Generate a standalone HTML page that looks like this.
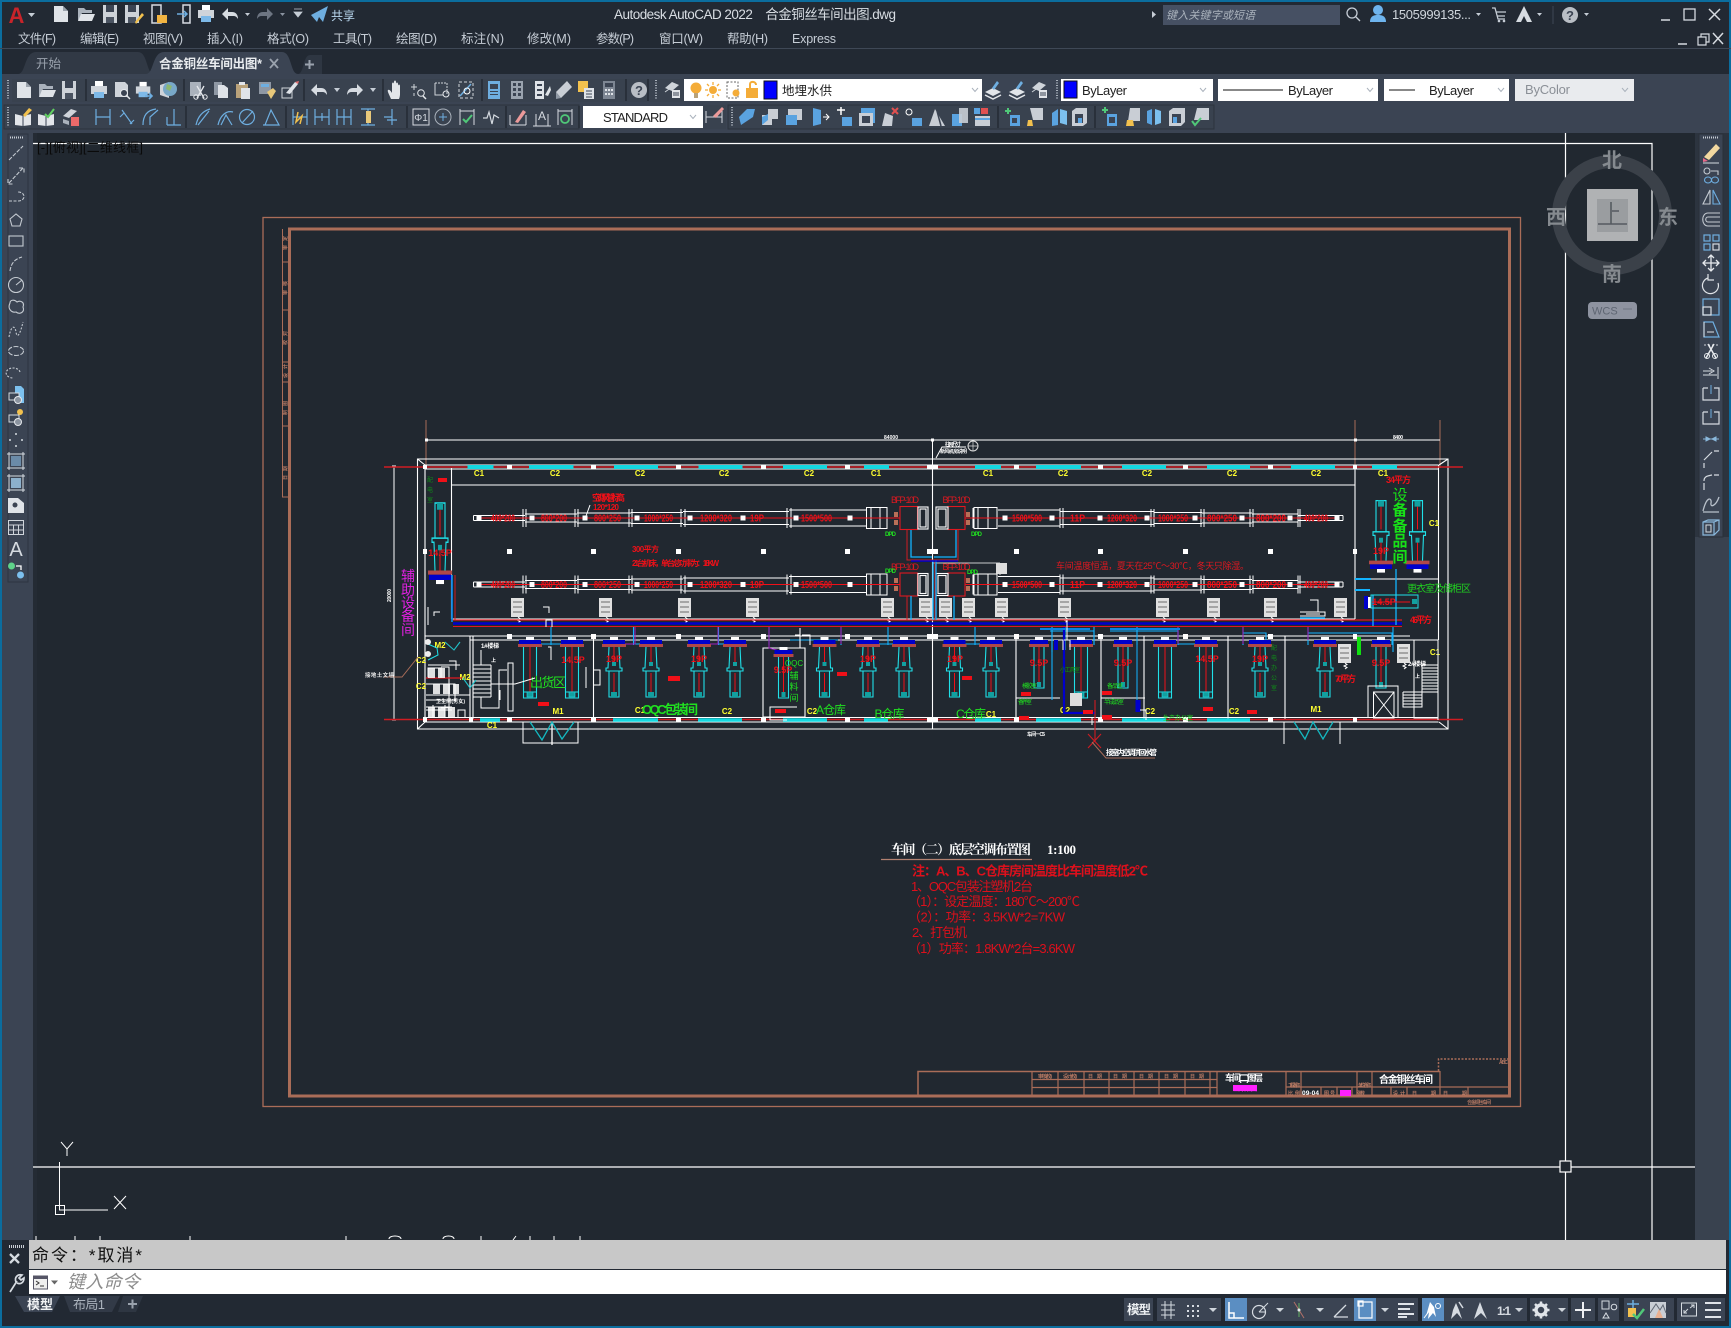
<!DOCTYPE html>
<html lang="zh"><head><meta charset="utf-8"><title>Autodesk AutoCAD 2022</title>
<style>
html,body{margin:0;padding:0;background:#222933;width:1731px;height:1328px;overflow:hidden}
svg{display:block;font-family:"Liberation Sans","Noto Sans CJK SC",sans-serif}
.m{font-size:12.5px;fill:#c6cdd6}
.y{font-size:8px;fill:#ffff30;font-weight:bold}
.r{font-size:10px;fill:#f01018;font-weight:bold}
.g{fill:#20e020}
.n{font-size:13px;fill:#dd101c}
.tw{font-size:5px;fill:#fff;font-weight:bold}
.b{font-size:5px;fill:#b87a64;font-weight:bold}
.dd{fill:none;stroke:#aab2bc;stroke-width:1}
.ic{fill:none;stroke:#d6dbe1;stroke-width:1.3}
.ib{fill:none;stroke:#6eaee0;stroke-width:1.2}
.st{fill:none;stroke:#c4cad1;stroke-width:1.1}
</style></head><body>
<svg width="1731" height="1328" viewBox="0 0 1731 1328" xmlns="http://www.w3.org/2000/svg">
<defs>
<g id="new"><path d="M-7-8h9l5 5V8H-7z" fill="#dfe3e8"/><path d="M2-8v5h5" fill="#9aa2ac"/></g>
<g id="open"><path d="M-8 7V-6h6l2 2h6v3H-4L-8 7z" fill="#aab2bc"/><path d="M-5 0H9L6 7H-8z" fill="#dfe3e8"/></g>
<g id="save"><path d="M-7-9H7V9H-7z" fill="#cdd2d8"/><path d="M-4-9h8v7h-8z" fill="#3b4453"/><path d="M-4 3h8v6h-8z" fill="#4a5361"/></g>
<g id="saveas"><use href="#save" x="-2"/><path d="M1 8L8-1l2 2-8 9z" fill="#f2c14e"/></g>
<g id="print"><path d="M-4-9H4v5h-8z" fill="#fff"/><path d="M-8-4H8V4H-8z" fill="#cfd4da"/><path d="M-5 2H5V8H-5z" fill="#7db9e8"/></g>
<g id="prev"><path d="M-7-8h10l3 3v12H-7z" fill="#cfd4da"/><circle cx="2" cy="3" r="3.5" fill="#3b4453" stroke="#e6e9ed"/><path d="M5 6l3 3" stroke="#e6e9ed" stroke-width="1.5"/></g>
<g id="plot"><use href="#print" x="-1" transform="scale(.9)"/><path d="M1 6h6M5 3l3 3-3 3" stroke="#6eaee0" stroke-width="1.6" fill="none"/></g>
<g id="globe"><path d="M-8-5L1-8V8L-8 5z" fill="#cfd4da"/><circle cx="2" cy="-1" r="7" fill="#78a8c8"/><path d="M-1-6L4-4 2 1-2-1z" fill="#8cb870"/></g>
<g id="cut"><path d="M-8-8H3V6H-8z" fill="#aab2bc"/><path d="M-1-4L6 8M6-4L-1 8" stroke="#e6e9ed" stroke-width="1.3"/><circle cx="-2" cy="7" r="2.2" fill="none" stroke="#e6e9ed"/><circle cx="7" cy="7" r="2.2" fill="none" stroke="#e6e9ed"/></g>
<g id="copy"><path d="M-7-8h8v13h-8z" fill="#8f98a4"/><path d="M-3-5h6l4 3V8H-3z" fill="#dfe3e8"/></g>
<g id="paste"><path d="M-7-6H5V8H-7z" fill="#b9a27a"/><path d="M-4-8h6v3h-6z" fill="#e2e5e9"/><path d="M-2-2h9V9h-9z" fill="#dfe3e8"/></g>
<g id="match"><path d="M-8-8H4V4H-8z" fill="#8f98a4"/><path d="M-6-6h8v3h-8z" fill="#6eaee0"/><path d="M0 2L6-2 9 1 4 9z" fill="#e8c87a"/></g>
<g id="block"><path d="M-8-2H2V8H-8z" fill="none" stroke="#cfd4da"/><path d="M-4 3l9-11 3 2-8 10z" fill="#dfe3e8"/><path d="M5-8l3 2 1-3z" fill="#e87070"/></g>
<g id="undo"><path d="M-8 0L-2-6v4h4c4 0 6 3 6 7-2-3-3-3-6-3h-4v4z" fill="#d6dbe1"/></g>
<g id="redo"><path d="M8 0L2-6v4h-4c-4 0-6 3-6 7 2-3 3-3 6-3h4v4z" fill="#d6dbe1"/></g>
<g id="redog"><path d="M8 0L2-6v4h-4c-4 0-6 3-6 7 2-3 3-3 6-3h4v4z" fill="#6d7582"/></g>
<g id="pan"><path d="M-5 9C-7 4-9 1-8 0s3 1 4 3V-6c0-2 2-2 2 0V-8c0-2 2-2 2 0v2c0-2 2-2 2 0v2c0-2 2-2 2 0V4C4 7 3 9 3 9z" fill="#e2e5e9"/></g>
<g id="zr"><path d="M-8-3H-2M-5-6V0M-5 3v3" stroke="#cfd4da" fill="none"/><circle cx="2" cy="3" r="3.3" fill="none" stroke="#e6e9ed"/><path d="M4 6l3 3" stroke="#e6e9ed" stroke-width="1.5"/></g>
<g id="zw"><path d="M-7-7H5V4" fill="none" stroke="#cfd4da" stroke-dasharray="2 1"/><path d="M-7-7V5H1" fill="none" stroke="#cfd4da"/><circle cx="4" cy="4" r="3" fill="none" stroke="#e6e9ed"/></g>
<g id="zp"><path d="M-7-8H7V8H-7z" fill="none" stroke="#cfd4da" stroke-dasharray="3 2"/><path d="M-6 6L5-6" stroke="#6eaee0" stroke-width="1.5"/><circle cx="1" cy="1" r="3" fill="none" stroke="#fff"/></g>
<g id="prop"><path d="M-6-9H6V9H-6z" fill="#6eaee0"/><path d="M-4-6h8v5h-8zM-4 1h8v1h-8zM-4 4h8v1h-8z" fill="#3b4453"/></g>
<g id="grid2"><path d="M-6-9H6V9H-6z" fill="#9aa3af"/><path d="M-4-7H-1V-4H-4zM1-7H4V-4H1zM-4-2H-1V1H-4zM1-2H4V1H1zM-4 3H-1V6H-4zM1 3H4V6H1z" fill="#3b4453"/></g>
<g id="tool"><path d="M-7-9H2V9H-7z" fill="#dfe3e8"/><path d="M-5-6H0v2h-5zM-5-1H0v2h-5zM-5 4H0v2h-5z" fill="#3b4453"/><path d="M3 5l5-9 1 4-3 6z" fill="#dfe3e8"/></g>
<g id="pen"><path d="M-8 2L3-9 8-3-3 8z" fill="#c9ced5"/><path d="M-8 2L-3 8-8 9z" fill="#8f98a4"/></g>
<g id="sheet"><path d="M-8-9H2V2H-8z" fill="#f2c14e"/><path d="M-2-2H8V9H-2z" fill="#dfe3e8"/><path d="M0 1H6M0 4H6M0 7H6" stroke="#3b4453"/></g>
<g id="calc"><path d="M-6-9H6V9H-6z" fill="#7d8693"/><path d="M-4-7H4V-3H-4z" fill="#3b4453"/><path d="M-4-1h2v2h-2zM-1-1h2v2h-2zM2-1h2v2H2zM-4 3h2v2h-2zM-1 3h2v2h-2zM2 3h2v2H2z" fill="#dfe3e8"/></g>
<g id="help"><circle r="8" fill="#b9bec5"/><text y="5" text-anchor="middle" font-size="13" font-weight="bold" fill="#3b4453">?</text></g>
<g id="layer"><path d="M-7-2L0-8 7-5 0 1z" fill="#cfd4da"/><path d="M-7 2L0-3" stroke="#cfd4da"/><path d="M0 0H8V8H0z" fill="#e2e5e9"/><path d="M1 3H7M1 5H7" stroke="#3b4453"/></g>
<g id="lays"><path d="M-8 2L0-2 8 2 0 6z" fill="#e2e5e9"/><path d="M-8 5L0 9 8 5" stroke="#e2e5e9" fill="none" stroke-width="1.5"/><path d="M-1-2L4-9 6-7 1 0z" fill="#6eaee0"/></g>
<g id="book"><path d="M-8-3L0-1 8-3V8L0 9-8 8z" fill="#e2e5e9"/><path d="M0-1V9" stroke="#3b4453"/></g>
<g id="solA"><path d="M-6 8L-8 0 0-8 8-8 6 0z" fill="#5aa3e0"/></g>
<g id="solB"><path d="M-8 8V-2L-2-2V-8H8V2H2V8z" fill="#c9ced5"/><path d="M-8 8V0L-2-3V3z" fill="#5aa3e0"/></g>
<g id="solC"><path d="M-6-8H8V3H-6z" fill="#c9ced5"/><path d="M-8-2H3V8H-8z" fill="#5aa3e0"/></g>
<g id="u1"><path d="M-11 0H11V4H-11z" fill="#0000cc"/><path d="M-12 4H12V7H-12z" fill="#b04848"/><path d="M-4-3H4V0H-4z" fill="#fff"/><path d="M-6.5 7V58H6.500V7" fill="none" stroke="#20e0e8" stroke-width="1.1"/><path d="M0 7V52" stroke="#f01018"/><path d="M-6.500 52H6.500M-6.500 58" stroke="#20e0e8"/><path d="M-3 52H3V57H-3z" fill="#12a0a0" stroke="#20e0e8" stroke-width=".6"/></g>
<g id="u2"><path d="M-11 0H11V4H-11z" fill="#0000cc"/><path d="M-12 4H12V7H-12z" fill="#b04848"/><path d="M-4-3H4V0H-4z" fill="#fff"/><path d="M-5 7L-6 28H-8V31H8V28H6L5 7M-5 31V57H5V31" fill="none" stroke="#20e0e8" stroke-width="1.1"/><path d="M0 7V25M0 33V52" stroke="#f01018"/><path d="M-2 22H2V26H-2zM-3 52H3V57H-3z" fill="#12a0a0"/></g>
<g id="u3"><path d="M-9 0H9V4H-9z" fill="#0000cc"/><path d="M-10 4H10V7H-10z" fill="#b04848"/><path d="M-4-3H4V0H-4z" fill="#fff"/><path d="M-5 7V48H5V7" fill="none" stroke="#20e0e8" stroke-width="1.1"/><path d="M0 7V42" stroke="#f01018"/><path d="M-2 42H2V47H-2z" fill="#12a0a0"/></g>
<g id="tag"><path d="M-1 0H12V19H-1z" fill="#e0e0e0"/><path d="M1 4H10M1 9H10M1 14H10" stroke="#6a6a6a"/><path d="M5 19l2 1.500-3 1.500 3 1.500-2 1.500" fill="none" stroke="#fff" transform="translate(1,0)"/></g>
<g id="ductL"><path d="M473.500-2.500H525M473.500 2.500H525M525-4H577M525 4H577M577-5H631M577 5H631M631-5.500H683M631 5.500H683M683-6.500H789M683 6.500H789M789-8H866M789 8H866M473.500-2.500V2.500M866.500-10.500H887V10.500H866.500ZM871-10V10M880-10V10M871 0H887" fill="none" stroke="#fff" stroke-width="1"/>
<path d="M523-9V9M526-9V9M575-9V9M578-9V9M629-9V9M632-9V9M681-9V9M685-9V9M787-10V10M791-10V10" stroke="#fff" stroke-width="1"/>
<path d="M480 0H900" stroke="#f01018" stroke-width="1.100"/>
<path d="M477-2H481V2H477zM530-2H534V2H530zM583-2H587V2H583zM635-2H639V2H635zM688-2H692V2H688zM741-2H745V2H741zM794-2H798V2H794zM848-2H852V2H848z" fill="#fff" stroke="#fff"/>
<text class="r" x="491" y="3.500" textLength="24" lengthAdjust="spacingAndGlyphs">400*200</text><text class="r" x="541" y="3.500" textLength="26" lengthAdjust="spacingAndGlyphs">800*200</text><text class="r" x="594" y="3.500" textLength="27" lengthAdjust="spacingAndGlyphs">800*250</text><text class="r" x="644" y="3.500" textLength="29" lengthAdjust="spacingAndGlyphs">1000*250</text><text class="r" x="700" y="3.500" textLength="32" lengthAdjust="spacingAndGlyphs">1200*320</text><text class="r" x="750" y="3.500" textLength="14" lengthAdjust="spacingAndGlyphs">19P</text><text class="r" x="801" y="3.500" textLength="31" lengthAdjust="spacingAndGlyphs">1500*500</text></g>
<g id="ductR"><path d="M998-8H1060M998 8H1060M1060-6.500H1154M1060 6.500H1154M1154-5.500H1202M1154 5.500H1202M1202-5H1252M1202 5H1252M1252-4H1298M1252 4H1298M1298-2.500H1343M1298 2.500H1343M1343-2.500V2.500M974-10.500H997V10.500H974ZM978-10V10M988-10V10M974 0H997" fill="none" stroke="#fff" stroke-width="1"/>
<path d="M1060-10V10M1063-10V10M1151-9V9M1154-9V9M1201-9V9M1204-9V9M1250-9V9M1253-9V9M1298-9V9M1300-9V9M973-10V10" stroke="#fff" stroke-width="1"/>
<path d="M965 0H1338" stroke="#f01018" stroke-width="1.100"/>
<path d="M1003-2H1007V2H1003zM1050-2H1054V2H1050zM1098-2H1102V2H1098zM1145-2H1149V2H1145zM1193-2H1197V2H1193zM1240-2H1244V2H1240zM1288-2H1292V2H1288zM1335-2H1339V2H1335z" fill="#fff" stroke="#fff"/>
<text class="r" x="1012" y="3.500" textLength="30" lengthAdjust="spacingAndGlyphs">1500*500</text><text class="r" x="1070" y="3.500" textLength="15" lengthAdjust="spacingAndGlyphs">11P</text><text class="r" x="1107" y="3.500" textLength="30" lengthAdjust="spacingAndGlyphs">1200*320</text><text class="r" x="1158" y="3.500" textLength="30" lengthAdjust="spacingAndGlyphs">1000*250</text><text class="r" x="1207" y="3.500" textLength="30" lengthAdjust="spacingAndGlyphs">800*250</text><text class="r" x="1256" y="3.500" textLength="30" lengthAdjust="spacingAndGlyphs">800*200</text><text class="r" x="1304" y="3.500" textLength="24" lengthAdjust="spacingAndGlyphs">400*200</text></g>
</defs>

<!-- chrome -->
<rect width="1731" height="1328" fill="#222933"/>
<rect x="33" y="133" width="1662" height="1107" fill="#212830"/>
<rect x="0" y="74" width="1731" height="59" fill="#3b4453"/>
<rect x="2" y="133" width="31" height="1107" fill="#3b4453"/>
<rect x="33" y="133" width="4" height="1107" fill="#242b34"/>
<rect x="1695" y="133" width="34" height="1107" fill="#39424f"/>
<rect x="1695" y="133" width="34" height="404" fill="#2c343f"/>
<rect x="1699" y="134" width="24" height="403" fill="#3b4453" stroke="#2a303a"/>
<rect x="8" y="134" width="20" height="448" fill="#3b4453" stroke="#2d3541"/>
<rect width="1731" height="2" fill="#0b6d9e"/>
<rect width="2" height="1328" fill="#0b6d9e"/>
<rect x="1729" width="2" height="1328" fill="#0b6d9e"/>
<rect y="1326" width="1731" height="2" fill="#0b6d9e"/>

<!-- title bar -->
<text x="8.500" y="23" font-size="22" font-weight="bold" fill="#c8242a" font-family="Liberation Sans,sans-serif">A</text>
<path d="M28 13h7l-3.500 4z" fill="#c6cdd6"/>
<use href="#new" x="61" y="14"/><use href="#open" x="86" y="14"/><use href="#save" x="110" y="14"/><use href="#saveas" x="134" y="14"/>
<g transform="translate(158,14)"><path d="M-6-9H3V9H-6z" fill="none" stroke="#d6dbe1" stroke-width="1.500"/><path d="M-1 1H9V9H-1z" fill="#f2b441"/></g>
<g transform="translate(183,14)"><path d="M0-9H7V9H0z" fill="none" stroke="#d6dbe1" stroke-width="1.500"/><path d="M-6 0H4M1-3l3 3-3 3" fill="none" stroke="#6eaee0" stroke-width="1.500"/></g>
<use href="#print" x="206" y="14"/><use href="#undo" x="230" y="14"/><path d="M245 13h5l-2.500 3z" fill="#c6cdd6"/><use href="#redog" x="265" y="14"/><path d="M280 13h5l-2.500 3z" fill="#8a93a0"/>
<path d="M294 9h8M294 12h8l-4 5z" fill="#c6cdd6" stroke="#c6cdd6" stroke-width=".8"/>
<path d="M311 15L328 6 323 22 319 17 317 22z" fill="#6eaee0"/>
<text x="331" y="20" font-size="12" fill="#b8d6ee">共享</text>
<text x="614" y="19" font-size="13.500" fill="#d8dde3" textLength="282" xml:space="preserve">Autodesk AutoCAD 2022    合金铜丝车间出图.dwg</text>
<path d="M1152 11l4 3.500-4 3.500z" fill="#c6cdd6"/>
<rect x="1163" y="5" width="177" height="20" fill="#465063"/>
<text x="1166" y="19" font-size="11" font-style="italic" fill="#aab2bc" textLength="89">键入关键字或短语</text>
<circle cx="1352" cy="13" r="5" fill="none" stroke="#c6cdd6" stroke-width="1.300"/><path d="M1356 17l4 4" stroke="#c6cdd6" stroke-width="1.300"/>
<circle cx="1378" cy="10" r="5" fill="#6eb4ee"/><path d="M1370 22c0-6 4-7 8-7s8 1 8 7z" fill="#6eb4ee"/>
<text x="1392" y="19" font-size="13" fill="#cfd5dc" textLength="79">1505999135...</text><path d="M1476 13h5l-2.500 3z" fill="#c6cdd6"/>
<path d="M1492 8h3l3 11h7M1496 12h10M1497 16h8" fill="none" stroke="#c6cdd6" stroke-width="1.300"/><circle cx="1499" cy="21" r="1.300" fill="#c6cdd6"/><circle cx="1504" cy="21" r="1.300" fill="#c6cdd6"/>
<path d="M1524 6L1532 22H1527L1524 16 1521 22H1516z" fill="#d6dbe1"/><path d="M1537 13h5l-2.500 3z" fill="#c6cdd6"/>
<path d="M1553 6V24" stroke="#3f4856"/>
<use href="#help" x="1570" y="15"/><path d="M1584 13h5l-2.500 3z" fill="#c6cdd6"/>
<path d="M1661 20h9" stroke="#d6dbe1" stroke-width="1.500"/><rect x="1684" y="9" width="11" height="11" fill="none" stroke="#d6dbe1" stroke-width="1.300"/><path d="M1709 9l11 11M1720 9l-11 11" stroke="#d6dbe1" stroke-width="1.500"/>
<!-- menu -->
<g class="m"><text x="18" y="43" textLength="38">文件(F)</text><text x="80" y="43" textLength="39">编辑(E)</text><text x="143" y="43" textLength="40">视图(V)</text><text x="207" y="43" textLength="36">插入(I)</text><text x="267" y="43" textLength="42">格式(O)</text><text x="333" y="43" textLength="39">工具(T)</text><text x="396" y="43" textLength="41">绘图(D)</text><text x="461" y="43" textLength="43">标注(N)</text><text x="527" y="43" textLength="44">修改(M)</text><text x="596" y="43" textLength="38">参数(P)</text><text x="659" y="43" textLength="44">窗口(W)</text><text x="727" y="43" textLength="41">帮助(H)</text><text x="792" y="43" textLength="44">Express</text></g>
<path d="M1678 44h9" stroke="#d6dbe1" stroke-width="1.500"/><path d="M1698 37h8v8h-8zM1701 37v-3h8v8h-3" fill="none" stroke="#d6dbe1" stroke-width="1.200"/><path d="M1713 33l10 11M1723 33l-10 11" stroke="#d6dbe1" stroke-width="1.500"/>
<path d="M0 48.500H1731" stroke="#3f4856"/>
<!-- tabs -->
<path d="M18 74C26 74 24 52 36 52H138C148 52 146 74 154 74z" fill="#313945"/>
<text x="36" y="68" font-size="12.500" fill="#9aa2ad">开始</text>
<path d="M146 74C154 74 152 52 164 52H282C292 52 290 74 298 74z" fill="#3b4453"/>
<text x="159" y="68" font-size="12.500" font-weight="bold" fill="#e8ebee" textLength="103">合金铜丝车间出图*</text>
<path d="M270 59l8 9M278 59l-8 9" stroke="#9aa2ad" stroke-width="1.800"/>
<path d="M298 74C304 74 303 55 310 55H322V74z" fill="#2e3642"/><path d="M305 64.500H314M309.500 60V69" stroke="#9aa2ad" stroke-width="2"/>

<!-- toolbar row 1 -->
<rect x="12" y="79" width="672" height="23" fill="#39424f"/>
<path d="M8 80V100" stroke="#aab2bc" stroke-width="2" stroke-dasharray="1 1.500"/>
<g><use href="#new" x="24" y="90"/><use href="#open" x="47" y="90"/><use href="#save" x="69" y="90"/><use href="#print" x="99" y="90"/><use href="#prev" x="122" y="90"/><use href="#plot" x="144" y="90"/><use href="#globe" x="168" y="90"/><use href="#cut" x="198" y="90"/><use href="#copy" x="221" y="90"/><use href="#paste" x="243" y="90"/><use href="#match" x="267" y="90"/><use href="#block" x="290" y="90"/><use href="#undo" x="319" y="90"/><path d="M334 88h6l-3 4z" fill="#c6cdd6"/><use href="#redo" x="355" y="90"/><path d="M370 88h6l-3 4z" fill="#c6cdd6"/><use href="#pan" x="396" y="90"/><use href="#zr" x="419" y="90"/><use href="#zw" x="442" y="90"/><use href="#zp" x="466" y="90"/><use href="#prop" x="494" y="90"/><use href="#grid2" x="517" y="90"/><use href="#tool" x="542" y="90"/><use href="#pen" x="564" y="90"/><use href="#sheet" x="586" y="90"/><use href="#calc" x="609" y="90"/><use href="#help" x="639" y="90"/><use href="#layer" x="672" y="90"/></g>
<path d="M86 79V101M184 79V101M304 79V101M383 79V101M482 79V101M626 79V101M648 79V101" stroke="#1f262e" stroke-width="1.200"/>
<path d="M656 80V100" stroke="#aab2bc" stroke-width="2" stroke-dasharray="1 1.500"/>
<rect x="684" y="79" width="298" height="22" fill="#fff"/>
<g transform="translate(696,90)"><circle cy="-2" r="5.500" fill="#f4ac38"/><path d="M-2 3H2V8H-2z" fill="#b9a27a"/></g>
<g transform="translate(713,90)"><circle r="4" fill="#f4ac38"/><path d="M0-8V-5M0 5V8M-8 0H-5M5 0H8M-6-6L-4-4M4 4L6 6M-6 6L-4 4M4-4L6-6" stroke="#f4ac38" stroke-width="1.300"/></g>
<g transform="translate(733,90)"><path d="M-6-8H5V8H-6z" fill="none" stroke="#666" stroke-dasharray="2 1.500"/><circle cx="3" cy="3" r="3.500" fill="#f4ac38"/></g>
<g transform="translate(752,90)"><path d="M-6-2H6V8H-6z" fill="#f4ac38"/><path d="M-2-2V-6C-2-9 4-9 4-5" fill="none" stroke="#f4ac38" stroke-width="2"/></g>
<rect x="764" y="81" width="13" height="18" fill="#0000ff" stroke="#111"/>
<text x="782" y="95" font-size="12.500" fill="#222">地埋水供</text>
<path d="M972 88l3 3.500 3-3.500" class="dd" stroke="#667"/>
<use href="#lays" x="993" y="90"/><use href="#lays" x="1017" y="90"/><use href="#layer" x="1039" y="90"/>
<path d="M1057 80V100" stroke="#aab2bc" stroke-width="2" stroke-dasharray="1 1.500"/>
<rect x="1061" y="79" width="152" height="22" fill="#fff"/><rect x="1064" y="81" width="13" height="17" fill="#0000ff" stroke="#111"/>
<text x="1082" y="95" font-size="13" fill="#222" textLength="45">ByLayer</text>
<path d="M1200 88l3 3.500 3-3.500" class="dd"/>
<rect x="1218" y="79" width="160" height="22" fill="#fff"/><path d="M1223 90H1283" stroke="#111"/>
<text x="1288" y="95" font-size="13" fill="#222" textLength="45">ByLayer</text><path d="M1367 88l3 3.500 3-3.500" class="dd"/>
<rect x="1384" y="79" width="125" height="22" fill="#fff"/><path d="M1389 90H1415" stroke="#111"/>
<text x="1429" y="95" font-size="13" fill="#222" textLength="45">ByLayer</text><path d="M1498 88l3 3.500 3-3.500" class="dd"/>
<rect x="1515" y="79" width="119" height="22" fill="#e9ebee"/>
<text x="1525" y="94" font-size="13" fill="#8a8f96" textLength="45">ByColor</text><path d="M1622 88l3 3.500 3-3.500" class="dd"/>

<!-- toolbar row 2 -->
<rect x="4" y="105" width="575" height="24" fill="#39424f" stroke="#2c333e"/>
<rect x="728" y="105" width="486" height="24" fill="#39424f" stroke="#2c333e"/>
<path d="M8 107V127M732 107V127" stroke="#aab2bc" stroke-width="2" stroke-dasharray="1 1.500"/>
<g transform="translate(23,117)"><use href="#book"/><path d="M0-2L6-9 9-7 2 0z" fill="#f2c14e"/></g>
<g transform="translate(46,117)"><use href="#book"/><path d="M-1-3L2 0 8-8" stroke="#60d060" stroke-width="2" fill="none"/></g>
<g transform="translate(71,117)"><path d="M-8-1L0-8 6-6-2 1z" fill="#cfd4da"/><path d="M-8 2L-2 4-2 8-8 6z" fill="#aab2bc"/><path d="M0 0H8V9H0z" fill="#ec6a6a"/></g>
<g class="ib">
<path d="M96 109V125M110 109V125M96 117H110"/>
<path d="M122 110L132 124M124 113L120 117M134 120L130 124" />
<path d="M143 125C143 115 148 110 156 109M150 125V117L158 110"/>
<path d="M167 125H181M174 109V125M167 117V125"/>
<path d="M196 125C198 116 203 111 210 109M198 125L209 111"/>
<path d="M218 125C220 116 226 110 233 112M221 125L226 115 232 125"/>
<circle cx="247" cy="117" r="7.500"/><path d="M242 123L253 111"/>
<path d="M263 125H279L271 110L265 125"/>
<path d="M293 109V125M307 109V125M293 117H307"/>
<path d="M315 109V125M329 109V125M315 117H329M322 113V121"/>
<path d="M337 109V125M344 109V125M351 109V125M337 117H351"/>
<path d="M361 109H375M361 125H375M368 109V125" />
<path d="M392 109V125M384 117H392M387 120H397"/>
</g>
<path d="M298 112L296 122 302 116 300 124" stroke="#f2c14e" fill="none" stroke-width="1.500"/>
<path d="M366 111H371V123H366z" fill="#e8c87a"/>
<g transform="translate(421,117)"><rect x="-8" y="-8" width="16" height="16" fill="none" stroke="#d6dbe1"/><text y="4" text-anchor="middle" font-size="10" fill="#d6dbe1">Φ1</text></g>
<g transform="translate(443,117)"><circle r="8" fill="none" stroke="#aab2bc"/><path d="M-4 0H4M0-4V4" stroke="#6eaee0"/></g>
<g transform="translate(467,117)"><path d="M-7-8V8M7-8V8M-7-6H7" stroke="#d6dbe1" fill="none"/><path d="M-4 2L-1 5 5-2" stroke="#50c878" stroke-width="2" fill="none"/></g>
<path d="M483 118L487 118 489 112 492 124 494 115 499 118" fill="none" stroke="#d6dbe1" stroke-width="1.200"/>
<g transform="translate(518,117)"><path d="M-8 8H8M-8-2V8M8-2V8" stroke="#d6dbe1" fill="none"/><path d="M-3 5L5-7 8-5 0 6z" fill="#ec9a9a"/></g>
<g transform="translate(542,117)"><path d="M-9 9H9M-6-3V9M6-3V9" stroke="#d6dbe1" fill="none"/><text y="3" text-anchor="middle" font-size="12" fill="#d6dbe1">A</text></g>
<g transform="translate(565,117)"><path d="M-7-8V8M7-8V8M-7-6H7" stroke="#d6dbe1" fill="none"/><circle cy="2" r="4" fill="none" stroke="#50c878" stroke-width="1.800"/></g>
<path d="M186 106V128M286 106V128M407 106V128M506 106V128M579 106V128" stroke="#1f262e" stroke-width="1.200"/>
<rect x="583" y="106" width="120" height="22" fill="#fff"/>
<text x="603" y="122" font-size="13" fill="#222" textLength="65">STANDARD</text><path d="M690 115l3 3.500 3-3.500" class="dd"/>
<rect x="703" y="105" width="23" height="24" fill="#39424f"/>
<path d="M706 117H722M706 111V123M722 111V123" stroke="#d6dbe1" fill="none"/><path d="M713 116L722 107 724 109 716 118z" fill="#ec9a9a"/>
<use href="#solA" x="747" y="117"/><use href="#solB" x="770" y="117"/><use href="#solC" x="794" y="117"/>
<g transform="translate(819,117)"><path d="M-6-9L2-7V7L-6 9z" fill="#5aa3e0"/><path d="M4 0H10M7-3L10 0 7 3" stroke="#fff" fill="none"/></g>
<g transform="translate(844,117)"><path d="M-7-7H1M-3-10V-2" stroke="#fff" stroke-width="1.500"/><path d="M-2 0H8V9H-2z" fill="#5aa3e0"/></g>
<g transform="translate(867,117)"><path d="M-6-9H8V6H-6z" fill="#5aa3e0"/><path d="M-8-4H6V9H-8z" fill="#c9ced5"/><path d="M-5-1H3V6H-5z" fill="#3b4453"/></g>
<g transform="translate(890,117)"><path d="M-8 9L-5-4 3-1 2 9z" fill="#c9ced5"/><path d="M2-9L8-3M8-9L2-3" stroke="#e05050" stroke-width="2"/></g>
<g transform="translate(914,117)"><circle cx="-5" cy="-5" r="3" fill="none" stroke="#fff"/><path d="M-2 1H8V9H-2z" fill="#5aa3e0"/></g>
<g transform="translate(937,117)"><path d="M-8 9L-2-8 8 9z" fill="#c9ced5"/><path d="M0-6L4 9" stroke="#3b4453" stroke-width="1.500"/></g>
<g transform="translate(960,117)"><path d="M-8-3H2V9H-8z" fill="#5aa3e0"/><path d="M-1-9H8V6H-1z" fill="#c9ced5" opacity=".9"/></g>
<g transform="translate(982,117)"><path d="M-8-9H-2V-3H-8z" fill="#5aa3e0"/><path d="M-1-9H6V-3H-1z" fill="#e05050"/><path d="M-7-1H8V9H-7z" fill="#c9ced5"/><path d="M-7 2H8" stroke="#5aa3e0" stroke-width="2"/></g>
<g transform="translate(1013,117)"><path d="M-8-6H-2M-5-9V-3" stroke="#50c878" stroke-width="2"/><path d="M-3-2H7V9H-3z" fill="#5aa3e0"/><path d="M-1 1H4V6H-1z" fill="#3b4453"/></g>
<g transform="translate(1035,117)"><path d="M-5-9H8V3H-2z" fill="#c9ced5"/><path d="M-7 3L-3 3-2 9H-8z" fill="#f2c14e"/></g>
<g transform="translate(1060,117)"><path d="M-8-4L-2-8V8L-8 9z" fill="#5aa3e0"/><path d="M0-8L7-6V8L0 6z" fill="#7cc0ee"/></g>
<g transform="translate(1079,117)"><path d="M-7-6L-3-9H8V6L4 9H-7z" fill="#c9ced5"/><path d="M-4-3H4V6H-4z" fill="#3b4453"/><path d="M-1 1H3V6H-1z" fill="#5aa3e0"/></g>
<g transform="translate(1110,117)"><path d="M-8-7H-2M-5-10V-4" stroke="#50c878" stroke-width="2"/><path d="M-3-3H7V9H-3z" fill="#5aa3e0"/><path d="M-1 0H5V6H-1z" fill="#3b4453"/></g>
<g transform="translate(1132,117)"><path d="M-2-9H8V4H-4z" fill="#c9ced5"/><path d="M-5 3H1L2 9H-6z" fill="#f2c14e"/></g>
<g transform="translate(1154,117)"><path d="M-7-6L-2-8V8L-7 6z" fill="#5aa3e0"/><path d="M1-8L7-6V6L1 8z" fill="#7cc0ee"/></g>
<g transform="translate(1177,117)"><path d="M-8-6L-4-9H8V5L4 9H-8z" fill="#c9ced5"/><path d="M-5-3H4V6H-5z" fill="#3b4453"/><path d="M-4 0H0V6H-4z" fill="#5aa3e0"/></g>
<g transform="translate(1200,117)"><path d="M-3-9H9V3H-6z" fill="#c9ced5"/><path d="M-8 4L-5 8 1 1" stroke="#50c878" stroke-width="2" fill="none"/></g>
<path d="M998 106V128M1095 106V128" stroke="#1f262e" stroke-width="1.200"/>

<!-- left tools -->
<path d="M10 137.500H24" stroke="#c9ced5" stroke-width="2" stroke-dasharray="1 1"/>
<g class="st">
<path d="M9 160L23 146" stroke-dasharray="4 1.500"/><path d="M9 183L23 168M19 168H24V173M8 179V184H13" stroke-dasharray="4 1.500"/>
<path d="M9 201H18C26 201 26 192 18 192" stroke-dasharray="3 1.500"/><path d="M10 219L16 214 22 219 20 226H12z"/>
<rect x="9" y="236" width="14" height="10"/><path d="M10 271C11 263 15 259 22 257" stroke-dasharray="4 1.500"/>
<circle cx="16" cy="285" r="7.500"/><path d="M16 285L22 280"/>
<path d="M10 303C7 309 12 313 16 312 20 315 25 312 23 307 25 302 20 300 17 302 14 299 10 300 10 303z"/>
<path d="M9 337C11 325 15 325 16 332S20 335 23 322" stroke-dasharray="2 1.500"/>
<ellipse cx="16" cy="351" rx="7.500" ry="4.500" stroke-dasharray="5 1.500"/><path d="M20 372A7 5 0 1 0 13 378" stroke-dasharray="2 1.500"/>
</g>
<g transform="translate(16,395)"><path d="M-1-9H5L8-6V8H-1z" fill="#7cc0ee"/><path d="M-7-2H3V5H-7z" fill="#3b4453" stroke="#d6dbe1"/><circle cx="2" cy="5" r="3.500" fill="#8a939f" stroke="#e6e9ed"/></g>
<g transform="translate(16,417)"><path d="M-7-2H3V5H-7z" fill="#3b4453" stroke="#d6dbe1"/><circle cx="2" cy="5" r="3.500" fill="#8a939f" stroke="#e6e9ed"/><circle cx="4" cy="-5" r="3" fill="#f2c14e"/></g>
<path d="M16 433v2M10 439v2M22 439v2M16 445v2" stroke="#d6dbe1" stroke-width="1.500"/>
<g transform="translate(16,461)"><path d="M-7-9V9M7-9V9M-9-7H9M-9 7H9" stroke="#d6dbe1" fill="none"/><rect x="-5" y="-5" width="10" height="10" fill="#6b8ba8"/></g>
<g transform="translate(16,483)"><path d="M-7-9V9M7-9V9M-9-7H9M-9 7H9" stroke="#d6dbe1" fill="none"/><rect x="-5" y="-5" width="10" height="10" fill="#8cb0cc"/></g>
<path d="M8 498H18L24 503V513H8z" fill="#dfe3e8"/><circle cx="15" cy="505" r="2.500" fill="#3b4453"/>
<path d="M8.500 520.500H23.500V534.500H8.500zM8.500 525H23.500M8.500 530H23.500M13.500 525V534.500M18.500 525V534.500" fill="none" stroke="#d0d5db"/>
<text x="16" y="556" text-anchor="middle" font-size="20" fill="#d6dbe1">A</text>
<circle cx="11.500" cy="566" r="3.500" fill="#5fd38a"/><circle cx="20.500" cy="575" r="3.500" fill="#7cc0ee"/><path d="M16 566H21V570" stroke="#fff" fill="none" stroke-width="1.300"/>

<!-- right tools -->
<path d="M1703 137.500H1719" stroke="#c9ced5" stroke-width="2" stroke-dasharray="1 1"/>
<g transform="translate(1711,153)"><path d="M-7 4L5-9 9-5-2 7z" fill="#f2d8a0"/><path d="M-8 5L-3 8-8 9z" fill="#e86a8a"/><path d="M-8 10H8" stroke="#d6dbe1"/></g>
<g class="st">
<circle cx="1707" cy="171" r="3"/><path d="M1711 171H1718V175"/><ellipse cx="1708" cy="180" rx="3.500" ry="3"  stroke="#6eaee0"/><ellipse cx="1715" cy="180" rx="3.500" ry="3" stroke="#6eaee0"/>
<path d="M1710 190L1703 204H1710z"/><path d="M1713 190L1720 204H1713z" stroke="#6eaee0"/>
<path d="M1720 213H1708C1701 213 1701 226 1708 226H1720M1720 217H1708C1705 217 1705 222 1708 222H1720" />
</g>
<g class="ib"><rect x="1704" y="235" width="6" height="6"/><rect x="1713" y="235" width="6" height="6"/><rect x="1704" y="244" width="6" height="6"/><rect x="1713" y="244" width="6" height="6" stroke="#d6dbe1"/></g>
<path d="M1711 255V271M1703 263H1719M1708 258L1711 255 1714 258M1708 268L1711 271 1714 268M1706 260L1703 263 1706 266M1716 260L1719 263 1716 266" fill="none" stroke="#e6e9ed" stroke-width="1.300"/>
<path d="M1718 283A8 8 0 1 1 1708 278M1708 274V280H1714" fill="none" stroke="#e0e4e9" stroke-width="1.200"/>
<rect x="1703" y="299" width="16" height="16" fill="none" stroke="#6eaee0" stroke-width="1.200"/><rect x="1703" y="307" width="8" height="8" fill="none" stroke="#e0e4e9" stroke-width="1.200"/>
<path d="M1704 322H1713L1719 337H1704z" fill="none" stroke="#6eaee0" stroke-width="1.200"/><path d="M1704 322V337M1707 332H1714" stroke="#e0e4e9"/>
<path d="M1704 345H1718" stroke="#d0d5db" stroke-dasharray="2 2"/><path d="M1708 344L1716 358M1714 344L1706 358" stroke="#e6e9ed" stroke-width="1.500"/><circle cx="1707" cy="356" r="2.500" fill="none" stroke="#e6e9ed"/><circle cx="1715" cy="356" r="2.500" fill="none" stroke="#e6e9ed"/>
<path d="M1703 371H1712M1703 375H1717M1709 368L1714 371 1709 374M1718 367V379" fill="none" stroke="#d6dbe1"/>
<path d="M1703 388V400H1719V388H1714M1703 388H1708" fill="none" stroke="#d6dbe1" stroke-width="1.200"/><path d="M1711 385V394" stroke="#6eaee0"/>
<path d="M1703 412V424H1719V412H1714M1703 412H1708" fill="none" stroke="#d6dbe1" stroke-width="1.200"/><path d="M1711 409V418" stroke="#6eaee0"/>
<path d="M1703 439H1719M1706 437L1710 439 1706 441ZM1716 437L1712 439 1716 441Z" fill="#8ab8dc" stroke="#8ab8dc"/>
<path d="M1704 460L1712 452M1714 451H1719M1704 463V468" fill="none" stroke="#d6dbe1" stroke-width="1.200"/>
<path d="M1704 481C1704 476 1708 476 1712 475M1714 475H1719M1704 483V490" fill="none" stroke="#d6dbe1" stroke-width="1.200"/>
<path d="M1703 511C1707 495 1712 498 1711 503S1716 506 1719 497M1703 512H1719" fill="none" stroke="#b8c0ca" stroke-width="1.300"/>
<path d="M1703 522V535H1714L1719 530V520H1708ZM1703 522H1714V535M1714 522L1719 520" fill="none" stroke="#8ab8dc" stroke-width="1.200"/><rect x="1706" y="525" width="5" height="7" fill="none" stroke="#d6dbe1"/>

<!-- model viewport long lines -->
<path d="M33 143.500H1652V1240" fill="none" stroke="#fff" stroke-width="1.200"/>
<path d="M1565.500 133V1240M33 1167H1695" fill="none" stroke="#fff" stroke-width="1.200"/>
<text x="37" y="152" font-size="13" fill="#0a0a0a" textLength="106">[-][俯视][二维线框]</text>
<rect x="1560" y="1161" width="11" height="11" fill="#212830" stroke="#fff" stroke-width="1.200"/>
<!-- UCS -->
<path d="M59.500 1162V1210H108" fill="none" stroke="#fff" stroke-width="1"/>
<rect x="55.500" y="1205.500" width="9" height="9" fill="none" stroke="#fff"/>
<path d="M61 1142L67 1149 73 1142M67 1149V1156M114 1196L126 1209M126 1196L114 1209" fill="none" stroke="#fff"/>
<path d="M36 1236V1240M75 1236V1240M100 1236V1240M190 1236V1240M346 1236V1240M389 1239C389 1235 401 1235 401 1239M443 1239C443 1235 454 1235 454 1239M481 1236V1240M516 1236L513 1240M530 1236V1240M554 1236V1240M580 1236V1240" stroke="#fff" fill="none"/>

<!-- ViewCube -->
<circle cx="1612" cy="215" r="53.500" fill="none" stroke="#3b4149" stroke-width="13"/>
<rect x="1587" y="189" width="51" height="52" fill="#b0b2b4"/><rect x="1597" y="199" width="31" height="33" fill="#9a9da0"/>
<path d="M1611 202V224M1612 211H1619M1598 224H1627" stroke="#555a60" stroke-width="1.600" fill="none"/>
<g font-size="20" fill="#858a8f" font-weight="bold" text-anchor="middle"><text x="1612" y="167">北</text><text x="1612" y="281">南</text><text x="1556" y="224">西</text><text x="1668" y="224">东</text></g>
<rect x="1588" y="302" width="49" height="17" rx="4" fill="#8e93a0"/>
<text x="1592" y="314.500" font-size="11" fill="#5e6572">WCS</text><path d="M1623 309H1632" stroke="#6e7582"/>

<!-- Frames -->
<g fill="none" stroke="#aa6d58">
<rect x="263" y="217.500" width="1257.500" height="889" stroke-width="1.300"/>
<rect x="289.500" y="229" width="1220" height="867" stroke-width="3"/>
<path d="M282.500 229V497M289 262H282M289 310H282M289 362H282M289 382H282M289 426H282M289 497H282" stroke-width="1"/>
<path d="M918 1096V1071.500H1440" stroke-width="1.500"/>
<path d="M1438.500 1071V1059H1509" stroke-width="1.500" stroke-dasharray="2 1.500"/>
<path d="M1032 1071V1096M1058 1071V1096M1084 1071V1096M1109 1071V1096M1134 1071V1096M1159 1071V1096M1185 1071V1096M1210 1071V1096M1217 1071V1096M1286 1071V1096M1301 1071V1096M1357 1071V1096M1372 1071V1096M1440 1071V1096M1032 1079.500H1217M1032 1087.500H1217M1286 1087H1509" stroke-width="1.200"/>
<path d="M1321 1087V1096M1337 1087V1096M1352 1087V1096M1391 1087V1096M1407 1087V1096M1468 1087V1096" stroke-width="1.200"/>
</g>
<g class="b"><text x="1038" y="1078" textLength="14">审核(校)</text><text x="1063" y="1078" textLength="14">设计(校)</text><text x="1088" y="1078" textLength="14">日 期</text><text x="1113" y="1078" textLength="14">日 期</text><text x="1139" y="1078" textLength="14">日 期</text><text x="1164" y="1078" textLength="14">日 期</text><text x="1190" y="1078" textLength="14">日 期</text><text x="1288" y="1087" textLength="12">工程名称</text><text x="1358" y="1087" textLength="13">单位名称</text><text x="1288" y="1095" textLength="12">比例</text><text x="1324" y="1095" textLength="11">图号</text><text x="1357" y="1095" textLength="8">张数</text><text x="1393" y="1095" textLength="12">设计</text><text x="1412" y="1095" textLength="24">日期</text><text x="1443" y="1095" textLength="24">日期</text><text x="1467" y="1104" textLength="24">合金铜丝车间</text><text x="1499" y="1064" textLength="9">ABC</text></g>
<g class="b"><text transform="translate(287,250) rotate(-90)" textLength="14">审定</text><text transform="translate(287,295) rotate(-90)" textLength="14">审核</text><text transform="translate(287,345) rotate(-90)" textLength="14">校对</text><text transform="translate(287,378) rotate(-90)" textLength="14">设计</text><text transform="translate(287,415) rotate(-90)" textLength="14">制图</text><text transform="translate(287,480) rotate(-90)" textLength="14">日期</text></g>
<text x="1225" y="1081" font-size="9" font-weight="bold" fill="#fff" textLength="38">车间(二)图层</text>
<rect x="1233" y="1085" width="24" height="6" fill="#ff20ff"/><text x="1233" y="1091" font-size="6" fill="#ff20ff" textLength="24" font-weight="bold">空调平面图</text>
<text x="1379" y="1083" font-size="10" font-weight="bold" fill="#fff" textLength="54">合金铜丝车间</text>
<text x="1302" y="1095" font-size="6.500" fill="#fff" font-weight="bold" textLength="17">09-04</text>
<rect x="1340" y="1090" width="11" height="6" fill="#ff20ff"/>

<!-- Notes -->
<text x="891" y="854" font-family="Liberation Serif,Noto Serif CJK SC,serif" font-size="13" font-weight="bold" fill="#fff" textLength="140">车间（二）底层空调布置图</text>
<text x="1047" y="854" font-family="Liberation Serif,serif" font-size="13" font-weight="bold" fill="#fff" textLength="29">1:100</text>
<path d="M881 859.500H1032" stroke="#b28170" stroke-width="1.300"/>
<g class="n"><text x="912" y="875.500" textLength="236" font-weight="bold">注：A、B、C仓库房间温度比车间温度低2℃</text><text x="911" y="891" textLength="122">1、OQC包装注塑机2台</text><text x="908" y="906" textLength="172">（1）：设定温度：180℃～200℃</text><text x="908" y="921.500" textLength="157">（2）：功率：3.5KW*2=7KW</text><text x="912" y="937" textLength="55">2、打包机</text><text x="908" y="953" textLength="167">（1）功率：1.8KW*2台=3.6KW</text></g>

<!-- Plan: dims & axes -->
<path d="M426 420V468M1355 420V468M1440 420V468" stroke="#a86c58" fill="none"/>
<path d="M426 440H1440M932.500 440V468" stroke="#fff" fill="none"/>
<rect x="425" y="438.500" width="3" height="3" fill="#fff"/><rect x="1354" y="438.500" width="3" height="3" fill="#fff"/><rect x="931" y="438.500" width="3" height="3" fill="#fff"/>
<text x="884" y="439" class="tw" textLength="14">84000</text><text x="1393" y="439" class="tw" textLength="10">8400</text>
<path d="M936 458L942 447H966" stroke="#fff" fill="none"/><text x="945" y="446" class="tw" textLength="16">柱网尺寸</text><text x="940" y="453" class="tw" textLength="27">新风机房说明</text><circle cx="973" cy="446" r="5" fill="none" stroke="#ddd"/><path d="M973 441V451M968 446H978" stroke="#ddd" stroke-width=".7"/>
<path d="M394 466V720" stroke="#fff"/><path d="M392 466H396M392 720H396" stroke="#fff"/>
<text transform="translate(391,602) rotate(-90)" class="tw" textLength="13">20000</text>
<!-- building outlines -->
<g fill="none" stroke="#fff" stroke-width="1.100">
<path d="M417.500 459H1448V729H417.500Z"/>
<path d="M417.500 459L425 465M1448 459L1439 465M417.500 729L425 722M1448 729L1439 722"/>
<path d="M425 465V722M1438.500 465V640"/>
<path d="M425 465H1438.500M425 469H1438.500M425 717.500H1438.500M425 722H1438.500"/>
<path d="M451.500 468V619M451.500 485H1355M1355 468V619M932.500 468V729"/>
<path d="M451.500 619H1355"/>
<path d="M425 636H1410M470 640H1438.500M1355 579H1438.500"/>
<path d="M593.500 636V720M1016 636V720M1101 636V720M1144 636V720M1228 636V720M1285 636V720"/>
<path d="M763 648H805V717H763ZM800 628V648"/>
<path d="M1016 698H1060M1101 698H1145"/>
<path d="M470 636V720M473 636V720"/>
</g>
<!-- axes red + windows -->
<path d="M384 467H1463M384 719.500H1463" stroke="#d01c22" stroke-width="1.600"/>
<path d="M467.500 467H493.500M529 467H573.500M614 467H658M698.500 467H742.500M783 467H827M864 467H889M975 467H1001M1036 467H1081M1122 467H1166M1207 467H1250M1291 467H1335M1372 467H1397" stroke="#14d8e0" stroke-width="4"/>
<path d="M480 720H500M613 720H658M698 720H742M783 720H827M864 720H888M975 720H1001M1036 720H1081M1122 720H1166M1207 720H1250" stroke="#14d8e0" stroke-width="3.500"/>
<path fill="#fff" d="M423 465h4v4h-4zM507 465h5v4h-5zM591 465h5v4h-5zM676 465h5v4h-5zM761 465h5v4h-5zM845 465h5v4h-5zM927 465h11v4h-11zM1014 465h5v4h-5zM1098 465h5v4h-5zM1183 465h5v4h-5zM1268 465h5v4h-5zM1353 465h4v4h-4z
M423 549h4v5h-4zM507 549h5v5h-5zM591 549h5v5h-5zM676 549h5v5h-5zM761 549h5v5h-5zM845 549h5v5h-5zM927 549h11v5h-11zM1014 549h5v5h-5zM1098 549h5v5h-5zM1183 549h5v5h-5zM1268 549h5v5h-5zM1353 549h4v5h-4z
M507 634h5v5h-5zM591 634h5v5h-5zM676 634h5v5h-5zM761 634h5v5h-5zM845 634h5v5h-5zM927 634h11v5h-11zM1014 634h5v5h-5zM1098 634h5v5h-5zM1183 634h5v5h-5zM1268 634h5v5h-5zM1353 634h4v5h-4z
M423 717h4v5h-4zM469 717h4v5h-4zM507 717h5v5h-5zM591 717h5v5h-5zM676 717h5v5h-5zM761 717h5v5h-5zM845 717h5v5h-5zM927 717h11v5h-11zM1014 717h5v5h-5zM1098 717h5v5h-5zM1183 717h5v5h-5zM1268 717h5v5h-5zM1353 717h4v5h-4z"/>
<!-- yellow labels -->
<g class="y" text-anchor="middle"><text x="479" y="476">C1</text><text x="555" y="476">C2</text><text x="640" y="476">C2</text><text x="724" y="476">C2</text><text x="809" y="476">C2</text><text x="876" y="476">C1</text><text x="988" y="476">C1</text><text x="1063" y="476">C2</text><text x="1147" y="476">C2</text><text x="1232" y="476">C2</text><text x="1316" y="476">C2</text><text x="1383" y="476">C1</text><text x="558" y="714">M1</text><text x="727" y="714">C2</text><text x="812" y="714">C2</text><text x="492" y="728">C1</text><text x="640" y="713">C1</text><text x="991" y="717">C1</text><text x="1234" y="714">C2</text><text x="1316" y="712">M1</text><text x="1434" y="526">C1</text><text x="1435" y="655">C1</text><text x="1065" y="713">C2</text><text x="1150" y="714">C2</text><text x="440" y="648">M2</text><text x="465" y="680">M2</text><text x="421" y="663">C2</text><text x="421" y="689">C2</text></g>

<!-- ducts -->
<use href="#ductL" y="518"/><use href="#ductL" y="584.500"/><use href="#ductR" y="518"/><use href="#ductR" y="584.500"/>
<!-- AHUs -->
<g fill="none" stroke-width="1.100">
<g stroke="#e01820"><rect x="900" y="506.500" width="17.500" height="23"/><rect x="900" y="573" width="17.500" height="23"/><rect x="948" y="506.500" width="17" height="23"/><rect x="948" y="573" width="17" height="23"/></g>
<g stroke="#fff"><rect x="918" y="507" width="10" height="22"/><rect x="920" y="509" width="6" height="18"/><rect x="918" y="573.500" width="10" height="22"/><rect x="920" y="575.500" width="6" height="18"/><rect x="936" y="507" width="12" height="22"/><rect x="938" y="509" width="8" height="18"/><rect x="936" y="573.500" width="12" height="22"/><rect x="938" y="575.500" width="8" height="18"/></g>
</g>
<path d="M894 512h4v5h-4zM894 520h4v5h-4zM894 578h4v5h-4zM894 586h4v5h-4zM966 512h4v5h-4zM966 520h4v5h-4zM966 578h4v5h-4zM966 586h4v5h-4z" fill="#b87058"/>
<g font-size="9" fill="#e01820"><text x="891" y="503" textLength="28">BFP-10D</text><text x="891" y="570" textLength="28">BFP-10D</text><text x="942.500" y="503" textLength="28">BFP-10D</text><text x="942.500" y="570" textLength="28">BFP-10D</text></g>
<g font-size="6" fill="#20e020" font-weight="bold"><text x="885" y="536" textLength="11">DPD</text><text x="885" y="573" textLength="11">DPD</text><text x="971" y="536" textLength="11">DPD</text><text x="967" y="574" textLength="11">DPD</text></g>
<path d="M932.500 563H1000M1000 563V575" stroke="#fff" fill="none" stroke-width=".8"/>
<rect x="996" y="563" width="11" height="11" fill="#ddd"/>
<!-- tag stacks -->
<g><use href="#tag" x="512" y="598"/><use href="#tag" x="600" y="598"/><use href="#tag" x="679" y="598"/><use href="#tag" x="747" y="598"/><use href="#tag" x="882" y="598"/><use href="#tag" x="920" y="598"/><use href="#tag" x="940" y="598"/><use href="#tag" x="963" y="598"/><use href="#tag" x="996" y="598"/><use href="#tag" x="1059" y="598"/><use href="#tag" x="1157" y="598"/><use href="#tag" x="1208" y="598"/><use href="#tag" x="1265" y="598"/><use href="#tag" x="1335" y="598"/></g>
<!-- pipes -->
<g fill="none">
<path d="M453 620H1402" stroke="#e01820" stroke-width="1.300"/>
<path d="M453 623.500H1402" stroke="#0000cc" stroke-width="2.500"/>
<path d="M453 626.500H1402" stroke="#e01820" stroke-width="1.100"/>
<path d="M452 575V622" stroke="#0a84e0" stroke-width="1.800"/><path d="M455 575V620" stroke="#d01c22" stroke-width="1"/>
<path d="M907 530V560H940M958 530V560H940M907 596V620M935 560V620" stroke="#d01c22" stroke-width="1"/>
<path d="M911 530V557H932M956 530V557H934M911 596V620M954 596V620M933 560V620M936 560V620" stroke="#12b4ff" stroke-width="1.300"/>
<path d="M911 561H958" stroke="#0000cc" stroke-width="1.600"/>
<path d="M551 627V645M633.500 627V645M718.500 627V645M769 627V645M841 627V645M888 627V645M975 627V645M1052 627V652M1094 627V645M1137 627V645M1178 627V645M1243 627V645M1308 627V645M1393 627V652" stroke="#12b4ff" stroke-width="1.100"/>
<path d="M540 644H564M620 644H645M705 644H729M790 640H838M873 644H898M960 644H985M1050 631H1094V645M1110 631H1178V645M1178 644H1200M1243 633H1266V645M1308 633H1392V645" stroke="#12b4ff" stroke-width="1.100"/>
<path d="M635 627V644H620M718 627V644H705M769 627V648L783 652M841 627V644M1178 627V644M1243 627V644M1308 627V640" stroke="#a020c0" stroke-width="1"/>
<path d="M1052 627V700M1065 627V650" stroke="#12b4ff" stroke-width="1.100"/>
<path d="M1064 627V713H1095" stroke="#0000cc" stroke-width="2.200"/>
<path d="M1056 640V650" stroke="#0000cc" stroke-width="4"/>
<path d="M1137 627V705" stroke="#12b4ff"/><path d="M1138 700V712" stroke="#0000cc" stroke-width="5"/>
<path d="M1396 569V625" stroke="#12b4ff" stroke-width="1.300"/>
<path d="M1355 590H1370" stroke="#12b4ff" stroke-width="2"/>
<path d="M1373 595V626" stroke="#12b4ff" stroke-width="1.300"/>
<path d="M1095 700V742M1088 734L1101 748M1101 734L1088 748" stroke="#d01c22" stroke-width="1.100"/>
<path d="M1092 742L1106 758H1155" stroke="#a86c58" stroke-width="1"/>
</g>
<path d="M1357 637h4v18h-4z" fill="#10e010"/>
<path d="M1040 629H1090M1110 629H1180" stroke="#0a84e0" stroke-width="2"/>
<!-- units -->
<g>
<use href="#u1" x="530" y="640"/><use href="#u1" x="572" y="640"/><use href="#u2" x="614" y="640"/><use href="#u2" x="651" y="640"/><use href="#u2" x="699" y="640"/><use href="#u2" x="735" y="640"/><use href="#u3" x="783.500" y="650"/><use href="#u2" x="824.500" y="640"/><use href="#u2" x="868" y="640"/><use href="#u2" x="904" y="640"/><use href="#u2" x="954.500" y="640"/><use href="#u2" x="991" y="640"/><use href="#u3" x="1039" y="640"/><use href="#u1" x="1081" y="640"/><use href="#u3" x="1123" y="640"/><use href="#u1" x="1165" y="640"/><use href="#u1" x="1206" y="640"/><use href="#u2" x="1260" y="640"/><use href="#u2" x="1325" y="640"/><use href="#u3" x="1381" y="640"/>
<g transform="translate(1381,569) scale(1,-1.200)"><use href="#u2"/></g><g transform="translate(1417.500,569) scale(1,-1.200)"><use href="#u2"/></g><g transform="translate(440,580) scale(1,-1.350)"><use href="#u2"/></g>
</g>
<rect x="1364" y="596" width="4" height="13" fill="#0000cc"/><rect x="1368" y="597" width="3" height="11" fill="#fff"/>
<path d="M1371 595H1418V608H1371ZM1372 602H1410" fill="none" stroke="#20e0e8"/><path d="M1372 602H1410" stroke="#f01018"/><rect x="1412" y="599" width="5" height="5" fill="#12a0a0"/>
<!-- unit labels & red blobs -->
<g class="r" text-anchor="middle" style="font-size:9px"><text x="573" y="663">14.5P</text><text x="614" y="662">19P</text><text x="699" y="662">19P</text><text x="783" y="673">9.5P</text><text x="868" y="662">19P</text><text x="955" y="662">19P</text><text x="1039" y="666">9.5P</text><text x="1123" y="666">9.5P</text><text x="1207" y="662">14.5P</text><text x="1260" y="662">19P</text><text x="1381" y="666">9.5P</text><text x="1381" y="554">19P</text><text x="1384" y="605">14.5P</text><text x="440" y="556">14.5P</text></g>
<path fill="#f01018" d="M438 478h9v4h-9zM538 702h11v4h-11zM668 676h12v5h-12zM775 709h11v4h-11zM837 672h10v4h-10zM962 676h10v4h-10zM1021 692h10v4h-10zM1019 716h10v4h-10zM1102 691h10v4h-10zM1203 707h10v4h-10zM1247 710h10v4h-10zM1083 710h10v4h-10zM1102 715h10v4h-10z"/>
<!-- plan text -->
<g fill="#f01018" font-weight="bold">
<text x="592" y="501" font-size="9" textLength="33">空调风管标高</text><text x="593" y="510" font-size="8" textLength="26">120*120</text><path d="M590 505L586 516" stroke="#fff"/>
<text x="632" y="552" font-size="8" textLength="27">300平方</text>
<text x="632" y="566" font-size="8" textLength="87">21台机床，单台总功率为：18KW</text>
<text x="1386" y="483" font-size="9" textLength="25">34平方</text><text x="1410" y="623" font-size="9" textLength="22">46平方</text><text x="1335" y="682" font-size="9" textLength="21">70平方</text>
</g>
<text x="1056" y="569" font-size="9" fill="#e01820" textLength="193">车间温度恒温，夏天在25℃～30℃，冬天只除湿。</text>
<g font-size="14" fill="#e020e0" text-anchor="middle"><text x="408" y="581">辅</text><text x="408" y="595">助</text><text x="408" y="608">设</text><text x="408" y="621">备</text><text x="408" y="635">间</text></g>
<g font-size="15" fill="#18e018" text-anchor="middle" font-weight="bold"><text x="1400" y="500" font-weight="normal">设</text><text x="1400" y="515">备</text><text x="1400" y="531">备</text><text x="1400" y="546">品</text><text x="1400" y="562">间</text></g>
<text x="1407" y="592" font-size="10" fill="#20d020" textLength="64">更衣室及储柜区</text>
<g class="g"><text x="530" y="687" font-size="13" textLength="36">出货区</text><text x="642" y="714" font-size="13" font-weight="bold" textLength="56">OQC包装间</text><text x="816" y="714" font-size="12" textLength="30">A仓库</text><text x="874.500" y="718" font-size="12" textLength="30">B仓库</text><text x="956" y="718" font-size="12" textLength="30">C仓库</text>
<g font-size="9" text-anchor="middle"><text x="794" y="666" font-size="8">OQC</text><text x="794" y="679">辅</text><text x="794" y="690">料</text><text x="794" y="701">间</text></g>
<g font-size="6"><text x="1022" y="688" textLength="15">模胶室</text><text x="1018" y="704" textLength="14">备件室</text><text x="1107" y="688" textLength="16">备品室</text><text x="1104" y="704" textLength="20">半成品室</text><text x="1163" y="720" textLength="30">生产办公室</text><text x="1060" y="672" textLength="20" fill="#109010">小工具室</text></g></g>
<g font-size="6" fill="#108a18" text-anchor="middle"><text x="1274" y="650">配</text><text x="1274" y="660">电</text><text x="1274" y="670">办</text><text x="1274" y="680">公</text><text x="1274" y="690">室</text><text x="430" y="482">配</text><text x="430" y="492">电</text><text x="430" y="502">室</text></g>
<!-- stairs left -->
<g fill="none" stroke="#fff" stroke-width="1">
<path d="M473 665H491M473 669H491M473 673H491M473 677H491M473 681H491M473 685H491M473 689H491M473 693H491M473 697H491M473 665V697M491 665V697"/>
<path d="M481 650V665M481 697V708H499V670H507M491 684H515L535 678M500 700V690M508 663H513V711H508Z"/>
<path d="M441 667H449V708H441M449 661H456V670"/>
<path d="M428 665H460"/>
<rect x="428" y="668" width="13" height="10"/>
<path d="M426 684H455V700H426M426 707H452M426 710H452M470 695H426"/>
<path d="M433 705V717M445 705V717M458 717V710H465V717"/>
</g>
<path d="M426 678H462" stroke="#e01820" stroke-width="1.300"/>
<path d="M428 644L437 648 438 655 428 660" stroke="#20e0e8" fill="none"/>
<path d="M445 642L454 650 460 642M463 678L470 688 476 680" stroke="#20c0c8" fill="none" stroke-width="1.100"/>
<path d="M433 684h7v10h-7zM443 684h7v10h-7zM453 684h6v10h-6zM428 668h7v10h-7zM438 668h7v10h-7zM428 707h7v10h-7zM438 707h7v10h-7zM448 707h7v10h-7z" fill="#fff" opacity=".85"/>
<circle cx="428" cy="642" r="3" fill="#eee"/><circle cx="428" cy="654" r="3" fill="#eee"/>
<text x="436" y="703" class="tw" textLength="29">卫生间(男女)</text>
<text x="481" y="648" font-size="6" fill="#fff" font-weight="bold" textLength="18">1#楼梯</text><text x="491" y="662" class="tw">上</text>
<path d="M418 657L402 677H384" stroke="#a86c58" fill="none"/>
<text x="365" y="677" font-size="5.500" fill="#e8e8e8" font-weight="bold" textLength="29">接地土文墙</text>
<!-- doors top-pipe tags -->
<g fill="none" stroke="#fff"><path d="M546 627V620H552V627M543 607H549V613M434 616V612H440M428 607V625M548 647H551V660M593 670H600V685H593M586 667V688M795 635H800V645M802 635H810V645M1060 640H1063V650M1064 640H1070V650M1140 710H1146V720"/>
</g>
<path d="M797 707H770V720H787" stroke="#fff" fill="none"/>
<rect x="1070" y="693" width="12" height="13" fill="#ddd"/>
<!-- bottom doors -->
<g fill="none" stroke="#fff" stroke-width="1"><path d="M523 722V743H578V722M1284 722V744M1340 722V744"/><path d="M552 722V745" stroke-width="1.300"/></g>
<path d="M530 722L542 740 552 722 562 739 574 722M1294 722L1305 739 1313 722 1323 739 1333 722" fill="none" stroke="#14b8c0" stroke-width="1.300"/>
<text x="1027" y="736" class="tw" textLength="18">车间一C5</text>
<text x="1106" y="755" font-size="7.500" fill="#fff" font-weight="bold" textLength="51">接室内空调供回水管</text>
<!-- right stairs & elevator -->
<g fill="none" stroke="#fff" stroke-width="1">
<path d="M1422 665H1438M1422 668H1438M1422 671H1438M1422 674H1438M1422 677H1438M1422 680H1438M1422 683H1438M1422 686H1438M1422 689H1438M1422 692H1438M1422 665V692M1438 640V720M1403 640H1438M1414 640V718H1438"/>
<path d="M1403 692H1422M1403 695H1422M1403 698H1422M1403 701H1422M1403 704H1422M1403 692V707H1422V692"/>
<rect x="1373.500" y="692" width="20.500" height="26"/><path d="M1373.500 692L1394 718M1394 692L1373.500 718"/>
<path d="M1368 718V686H1398V718"/>
</g>
<text x="1408" y="666" font-size="6" fill="#fff" font-weight="bold" textLength="18">2#楼梯</text><text x="1415" y="678" class="tw">上</text>
<use href="#tag" x="1339" y="644"/><use href="#tag" x="1398" y="644"/>
<path d="M1067 620V640M1092 717V725" stroke="#fff"/>
<path d="M1300 612H1325V616H1300M1310 600H1318V612M1306 614H1320" stroke="#fff" fill="none"/><path d="M1300 618H1325" stroke="#12b4ff" stroke-width="1.500"/>
<path d="M1355 579H1371" stroke="#12b4ff" stroke-width="2"/>

<!-- command line -->
<rect x="2" y="1240" width="1727" height="56" fill="#222933"/>
<rect x="29" y="1240" width="1697" height="29" fill="#c8c8c8"/>
<rect x="29" y="1270" width="1697" height="24" fill="#fff"/>
<text x="32" y="1261" font-size="17" fill="#111" textLength="110">命令：*取消*</text>
<path d="M9 1246.500H25" stroke="#c9ced5" stroke-width="3" stroke-dasharray="1 1"/>
<path d="M10 1254l9 9M19 1254l-9 9" stroke="#d6dbe1" stroke-width="2.300"/>
<path d="M10 1292L17 1281M16 1282C14 1277 18 1274 22 1275L19 1278 21 1280 24 1278C24 1282 21 1285 17 1283" fill="none" stroke="#d6dbe1" stroke-width="1.700"/>
<rect x="33.500" y="1276" width="14" height="13" fill="#eee" stroke="#556"/><path d="M34 1276H47V1279H34z" fill="#556"/><path d="M36 1281l3 2-3 2M40 1286h4" stroke="#333" fill="none"/>
<path d="M51 1280.500h7l-3.500 4z" fill="#666"/>
<text x="67" y="1288" font-size="18" font-style="italic" fill="#8c8c8c" textLength="73">键入命令</text>

<!-- bottom tabs -->
<path d="M15 1296H60L52 1312H24z" fill="#3b4453"/><text x="27" y="1309" font-size="13" fill="#f0f2f4" font-weight="bold">模型</text>
<path d="M64 1296H120L112 1312H70z" fill="#323a47"/><text x="73" y="1309" font-size="13" fill="#aab2bc" textLength="32">布局1</text>
<path d="M123 1296H143L136 1312H118z" fill="#2e3642"/><path d="M128 1304H137M132.500 1299.500V1308.500" stroke="#9aa2ad" stroke-width="2"/>

<!-- status bar -->
<g fill="#3b4453"><rect x="1124" y="1298" width="29" height="23"/><rect x="1157" y="1298" width="64" height="23"/><rect x="1225" y="1298" width="193" height="23"/><rect x="1422" y="1298" width="105" height="23"/><rect x="1530" y="1298" width="38" height="23"/><rect x="1571" y="1298" width="24" height="23"/><rect x="1598" y="1298" width="21" height="23"/><rect x="1624" y="1298" width="50" height="23"/><rect x="1677" y="1298" width="48" height="23"/></g>
<rect x="1225" y="1298" width="22" height="23" fill="#5b8ec2"/><rect x="1354" y="1298" width="22" height="23" fill="#5b8ec2"/><rect x="1422" y="1298" width="22" height="23" fill="#5b8ec2"/>
<text x="1127" y="1314" font-size="12.500" fill="#eceff2" font-weight="bold" textLength="24">模型</text>
<path d="M1161 1305H1175M1161 1310H1175M1161 1315H1175M1165 1301V1319M1171 1301V1319" stroke="#d6dbe1" fill="none"/>
<path d="M1187 1305h2v2h-2zM1192 1305h2v2h-2zM1197 1305h2v2h-2zM1187 1310h2v2h-2zM1192 1310h2v2h-2zM1197 1310h2v2h-2zM1187 1315h2v2h-2zM1192 1315h2v2h-2zM1197 1315h2v2h-2z" fill="#d6dbe1"/>
<path fill="#cfd5dc" d="M1209 1308h8l-4 4zM1276 1308h8l-4 4zM1316 1308h8l-4 4zM1381 1308h8l-4 4zM1515 1308h8l-4 4zM1558 1308h8l-4 4z"/>
<path d="M1229 1302V1318H1244M1229 1313H1234V1318" fill="none" stroke="#fff" stroke-width="1.500"/>
<circle cx="1259" cy="1312" r="6.500" fill="none" stroke="#d6dbe1" stroke-width="1.200"/><path d="M1259 1312L1268 1303M1259 1312H1266" stroke="#d6dbe1"/>
<path d="M1294 1302L1304 1318" stroke="#b07068"/><path d="M1299 1303V1317" stroke="#60b060"/><circle cx="1299" cy="1310" r="1.500" fill="#e6e9ed"/>
<path d="M1334 1317H1348M1334 1317L1346 1305" fill="none" stroke="#d6dbe1" stroke-width="1.300"/>
<path d="M1359 1302H1372V1318H1359ZM1358 1301h5v5h-5z" fill="none" stroke="#fff" stroke-width="1.200"/>
<path d="M1398 1304H1414M1398 1309H1410M1398 1314H1414M1398 1317H1407" stroke="#e0e4e9" stroke-width="2"/>
<g transform="translate(1432,1310)"><path d="M-2-8L2-3 4 7 1 3-4 9-3 2-6 6z" fill="#fff"/><circle cx="6" cy="-4" r="2.500" fill="none" stroke="#fff"/><path d="M-8 8L-2 0" stroke="#fff"/></g>
<g transform="translate(1456,1310)"><path d="M0-7L3 0 6 9 1 3-5 9-3 0z" fill="#d6dbe1"/><path d="M3-8L7-2" stroke="#d6dbe1" stroke-width="1.500"/></g>
<g transform="translate(1480,1310)"><path d="M0-8L3 0 7 9 1 3-6 9-3 0z" fill="#d6dbe1"/></g>
<text x="1497" y="1315" font-size="12" fill="#d6dbe1" textLength="14" font-weight="bold">1:1</text>
<g transform="translate(1541,1310)"><circle r="5" fill="none" stroke="#e0e4e9" stroke-width="3.500"/><path d="M0-8.500V-6M0 6V8.500M-8.500 0H-6M6 0H8.500M-6-6L-4-4M4 4L6 6M-6 6L-4 4M4-4L6-6" stroke="#e0e4e9" stroke-width="2.500"/></g>
<path d="M1575 1310H1591M1583 1302V1318" stroke="#eef0f3" stroke-width="2"/>
<path d="M1602 1301h7v8h-7zM1603 1318l3-5 3 5z" fill="none" stroke="#d6dbe1"/><circle cx="1614" cy="1307" r="2.800" fill="none" stroke="#d6dbe1"/>
<g transform="translate(1635,1310)"><path d="M-7-2H1V7H-7z" fill="#f2c14e"/><path d="M-8-6H4M-2-10V-2" stroke="#6eaee0" stroke-width="1.500"/><path d="M-2 4L2 8 9-1" stroke="#50c878" stroke-width="2.500" fill="none"/></g>
<g transform="translate(1658,1310)"><rect x="-8" y="-8" width="16" height="16" fill="#c9ced5"/><path d="M-8 3L-2-6 2 0 5-5 8 3" stroke="#5e6672" fill="none"/><path d="M-3 8L1-1 5 8z" fill="#eab090"/></g>
<rect x="1681.500" y="1303" width="15" height="13" fill="none" stroke="#d6dbe1"/><path d="M1684 1313L1688 1309M1690 1308l4-3M1691 1305h3v3M1684 1310v3h3" stroke="#d6dbe1" fill="none"/>
<path d="M1705 1303H1721M1705 1310H1721M1705 1317H1721" stroke="#e0e4e9" stroke-width="2"/>
</svg>
</body></html>
